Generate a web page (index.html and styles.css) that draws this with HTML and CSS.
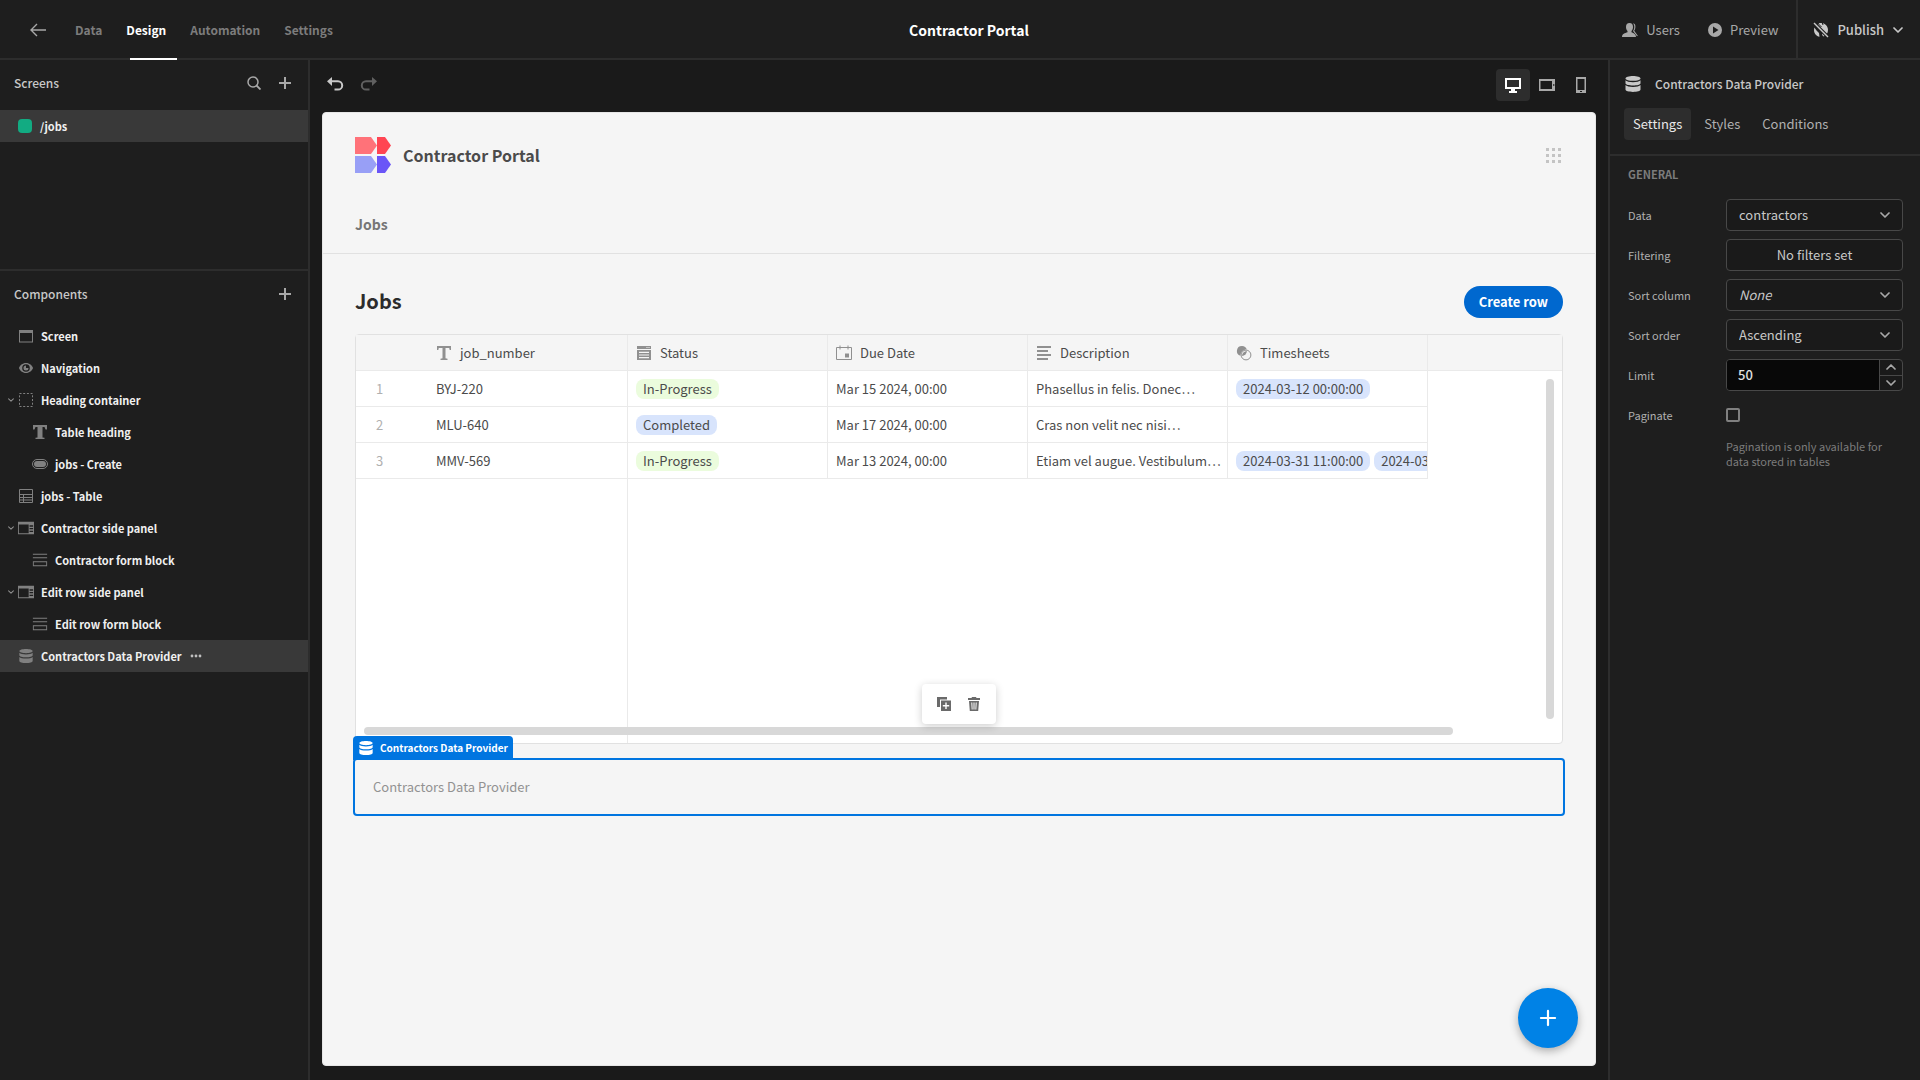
FILE: index.html
```html
<!DOCTYPE html>
<html lang="en">
<head>
<meta charset="utf-8">
<meta name="viewport" content="width=device-width, initial-scale=1">
<title>Contractor Portal</title>
<link rel="stylesheet" href="styles.css">
</head>
<body>
<svg class="sprite" aria-hidden="true">
  <symbol id="i-data" viewBox="0 0 18 18"><path d="M9 1C4.900 1 1.500 2 1.500 3.400S4.900 5.800 9 5.800s7.500-1 7.500-2.400S13.100 1 9 1z"/><path d="M1.500 5.300v2.900C1.500 9.500 4.900 10.500 9 10.500s7.500-1 7.500-2.300V5.300C15.500 6.500 12.500 7.200 9 7.200s-6.500-.7-7.500-1.900z"/><path d="M1.500 10v4.600C1.500 16 4.900 17 9 17s7.500-1 7.500-2.400V10c-1 1.200-4 1.900-7.500 1.900S2.500 11.200 1.500 10z"/></symbol>
  <symbol id="i-plus" viewBox="0 0 14 14"><path d="M6 1h2v5h5v2H8v5H6V8H1V6h5z"/></symbol>
  <symbol id="i-chev" viewBox="0 0 10 6"><path d="M1 1l4 4 4-4" fill="none" stroke="currentColor" stroke-width="1.700" stroke-linecap="round" stroke-linejoin="round"/></symbol>
  <symbol id="i-undo" viewBox="0 0 18 18"><path d="M6 .9v9L1 5.200z"/><path d="M5 5.200h7a4 4 0 0 1 0 8.400H8.500" fill="none" stroke="currentColor" stroke-width="2"/></symbol>
  <symbol id="i-panel" viewBox="0 0 18 14"><path d="M0 0h18v14H0zM1 3v10h11V3zM13 4v1.500h4V4zm0 3v1.500h4V7zm0 3v1.500h4V10z" fill-rule="evenodd"/></symbol>
  <symbol id="i-form" viewBox="0 0 18 14"><path d="M1 0h16v1H1zM1 4h16v1H1zM1 8.500h16V14H1zm1 1V13h14V9.500z" fill-rule="evenodd"/></symbol>
  <symbol id="i-text" viewBox="0 0 16 16"><path d="M1 1h14v4h-1.300l-.5-2H9.500v10.300l2 .4V15h-7v-1.300l2-.4V3H2.800l-.5 2H1z"/></symbol>
</svg>

<div class="app">
  <header class="topbar">
    <nav class="main-nav">
      <a class="back" href="#" aria-label="Back"><svg width="16" height="14" viewBox="0 0 16 14"><path d="M7 1L1 7l6 6M1 7h15" fill="none" stroke="currentColor" stroke-width="1.400"/></svg></a>
      <a href="#">Data</a>
      <a class="active" href="#">Design</a>
      <a href="#">Automation</a>
      <a href="#">Settings</a>
    </nav>
    <h1 class="app-title">Contractor Portal</h1>
    <div class="actions">
      <button class="action" type="button"><svg width="16" height="15" viewBox="0 0 16 15"><path d="M7.500 0C5.200 0 4 1.600 4 4c0 1.800.6 3 1.500 3.900v1.300C3 10 0 10.800 0 14h14c0-2.800-2-3.900-4.500-4.800V7.900C10.400 7 11 5.800 11 4c0-2.400-1.200-4-3.500-4z"/><path d="M11 .3c2 .3 2.600 2 2.400 4-.1 1.500-.5 2.600-1.200 3.400l3.600 5.100-.8.500-4-5.300c1-1.200 1.300-2.500 1.300-4S11.900 1.200 11 .3z"/></svg>Users</button>
      <button class="action" type="button"><svg width="14" height="14" viewBox="0 0 14 14"><path d="M7 0a7 7 0 1 0 0 14A7 7 0 0 0 7 0zM5 3.500L10.500 7 5 10.500z" fill-rule="evenodd"/></svg>Preview</button>
      <button class="action publish" type="button"><svg width="16" height="16" viewBox="0 0 16 16"><path d="M8 1c3.900 0 7 3.100 7 7 0 3-1.800 5.500-4.300 6.500L9 13l1-3-3-2-3-4 2-2.700C6.600 1.100 7.300 1 8 1zM1.300 5.500L3.500 8.500 6 11l.5 3.800C3.400 14.200 1 11.400 1 8z"/><path d="M1 1l14 14" stroke="#1e1e1e" stroke-width="3.500"/><path d="M1 1l14 14" stroke="currentColor" stroke-width="1.400"/><path d="M4.500 1l4 4M9 0l1 3" stroke="#1e1e1e" stroke-width="1"/></svg>Publish<svg class="caret" width="10" height="6"><use href="#i-chev"/></svg></button>
    </div>
  </header>

  <aside class="sidebar">
    <section class="screens">
      <header class="side-head"><h2>Screens</h2>
        <button type="button" aria-label="Search screens"><svg width="14" height="14" viewBox="0 0 14 14"><path d="M9.500 9.500L13.500 13.500" stroke="currentColor" stroke-width="1.800"/><circle cx="6" cy="6" r="5" fill="none" stroke="currentColor" stroke-width="1.500"/></svg></button>
        <button type="button" aria-label="Add screen"><svg width="14" height="14"><use href="#i-plus"/></svg></button>
      </header>
      <a class="row selected screen-row" href="#"><span class="swatch"></span>/jobs</a>
    </section>
    <section>
      <header class="side-head comp-head"><h2>Components</h2>
        <button type="button" aria-label="Add component"><svg width="14" height="14"><use href="#i-plus"/></svg></button>
      </header>
      <ul class="tree">
        <li><a class="row" href="#"><span class="twist"></span><svg class="ico" viewBox="0 0 16 16"><path d="M1 2h14v12.500H1zM2 5v8.500h12V5z" fill-rule="evenodd"/></svg>Screen</a></li>
        <li><a class="row" href="#"><span class="twist"></span><svg class="ico" viewBox="0 0 16 16"><path d="M8 3C4.500 3 1.800 5.500 1 8c.8 2.500 3.500 5 7 5s6.200-2.500 7-5c-.8-2.500-3.500-5-7-5zm0 1.200a3.800 3.800 0 1 1 0 7.600 3.800 3.800 0 0 1 0-7.600z" fill-rule="evenodd"/><path d="M8 5.500a2.500 2.500 0 1 0 2.500 2.500H8z"/></svg>Navigation</a></li>
        <li><a class="row" href="#"><span class="twist"><svg width="6" height="4"><use href="#i-chev"/></svg></span><svg class="ico" viewBox="0 0 16 16"><rect x="1.500" y="1.500" width="13" height="13" fill="none" stroke="currentColor" stroke-dasharray="2 1.700"/></svg>Heading container</a></li>
        <li><a class="row nested" href="#"><svg class="ico" viewBox="0 0 16 16"><path d="M1 1h14v4.500h-1.500L12.500 3h-2v10.500l2 .3V15h-9v-1.200l2-.3V3h-2l-1 2.500H1z"/></svg>Table heading</a></li>
        <li><a class="row nested" href="#"><svg class="ico" viewBox="0 0 16 16"><rect x=".5" y="3.500" width="15" height="9" rx="4.500" fill="none" stroke="currentColor"/><rect x="2" y="5" width="12" height="6" rx="3"/></svg>jobs - Create</a></li>
        <li><a class="row" href="#"><span class="twist"></span><svg class="ico" viewBox="0 0 16 16"><path d="M1.500 1.500h13v13h-13zM1.500 6.500h13M1.500 9.500h13M1.500 12h13M5.500 6.500v8" fill="none" stroke="currentColor"/></svg>jobs - Table</a></li>
        <li><a class="row" href="#"><span class="twist"><svg width="6" height="4"><use href="#i-chev"/></svg></span><svg class="ico"><use href="#i-panel"/></svg>Contractor side panel</a></li>
        <li><a class="row nested" href="#"><svg class="ico"><use href="#i-form"/></svg>Contractor form block</a></li>
        <li><a class="row" href="#"><span class="twist"><svg width="6" height="4"><use href="#i-chev"/></svg></span><svg class="ico"><use href="#i-panel"/></svg>Edit row side panel</a></li>
        <li><a class="row nested" href="#"><svg class="ico"><use href="#i-form"/></svg>Edit row form block</a></li>
        <li><a class="row selected" href="#"><span class="twist"></span><svg class="ico"><use href="#i-data"/></svg>Contractors Data Provider<svg class="more" width="12" height="4" viewBox="0 0 12 4"><circle cx="2" cy="2" r="1.400"/><circle cx="6" cy="2" r="1.400"/><circle cx="10" cy="2" r="1.400"/></svg></a></li>
      </ul>
    </section>
  </aside>

  <main class="stage">
    <div class="toolbar">
      <button type="button" aria-label="Undo"><svg width="18" height="18"><use href="#i-undo"/></svg></button>
      <button class="off redo" type="button" aria-label="Redo"><svg width="18" height="18"><use href="#i-undo"/></svg></button>
      <div class="devices">
        <button class="on" type="button" aria-label="Desktop"><svg width="16" height="16" viewBox="0 0 16 16"><path d="M0 1h16v11h-6v2h2v2H4v-2h2v-2H0zm2 2v7h12V3z" fill-rule="evenodd"/></svg></button>
        <button type="button" aria-label="Tablet"><svg width="16" height="16" viewBox="0 0 16 16"><path d="M0 2h16v12H0zM1.500 4v8H13V4zm12.800 3v2h1V7z" fill-rule="evenodd"/></svg></button>
        <button type="button" aria-label="Mobile"><svg width="16" height="16" viewBox="0 0 16 16"><path d="M3 0h10v16H3zM4.500 2v11h7V2zM7 14v1h2v-1z" fill-rule="evenodd"/></svg></button>
      </div>
    </div>

    <div class="preview">
      <header class="site-head">
        <div class="brand">
          <svg width="36" height="36" viewBox="0 0 36 36"><path fill="#ff7279" d="M0 0h16l6 8.500-6 8.500H0z"/><path fill="#ff4553" d="M22 0h8l6 8.500-6 8.500h-8z"/><path fill="#989ff6" d="M0 19h16l6 8.500-6 8.500H0z"/><path fill="#6a55f7" d="M22 19h8l6 8.500-6 8.500h-8z"/></svg>
          <span class="brand-name">Contractor Portal</span>
          <button class="apps" type="button" aria-label="App menu"><svg width="15" height="15" viewBox="0 0 15 15"><path d="M0 0h3v3H0zm6 0h3v3H6zm6 0h3v3h-3zM0 6h3v3H0zm6 0h3v3H6zm6 0h3v3h-3zM0 12h3v3H0zm6 0h3v3H6zm6 0h3v3h-3z"/></svg></button>
        </div>
        <nav class="site-nav"><a href="#">Jobs</a></nav>
      </header>
      <div class="site-body">
        <div class="heading"><h2>Jobs</h2><button class="create" type="button">Create row</button></div>
        <div class="grid">
          <table>
            <colgroup><col class="c-idx"><col class="c"><col class="c"><col class="c"><col class="c"><col class="c"><col></colgroup>
            <thead><tr>
              <th class="idx"></th>
              <th><div class="th"><svg width="16" height="16"><use href="#i-text"/></svg>job_number</div></th>
              <th><div class="th"><svg width="16" height="16" viewBox="0 0 16 16"><path d="M1 1h14v3H1zm9.500 1v1h1V2zm2 0v1h1V2zM1 5h14v10H1zm2 1.800V8h10V6.800zm0 2.700v1h10v-1zm0 2.500v1.200h10V12z" fill-rule="evenodd"/></svg>Status</div></th>
              <th><div class="th"><svg width="16" height="16" viewBox="0 0 16 16"><path d="M.5 2.500h15v12H.5zM4 .5v4M12 .5v4" fill="none" stroke="currentColor"/><path d="M9 8.500h4v4H9z"/></svg>Due Date</div></th>
              <th><div class="th"><svg width="16" height="16" viewBox="0 0 16 16"><path d="M1 1h14v2H1zm0 4h11v2H1zm0 4h14v2H1zm0 4h11v2H1z"/></svg>Description</div></th>
              <th><div class="th"><svg width="16" height="16" viewBox="0 0 16 16"><path d="M6 1a5 5 0 0 0-1.500 9.800C4.500 7 7 4.500 10.800 4.500A5 5 0 0 0 6 1z"/><circle cx="10" cy="10" r="4.900" fill="none" stroke="currentColor"/><path d="M10.900 6a5 5 0 0 1-4.900 4.900A5 5 0 0 1 10.900 6z"/></svg>Timesheets</div></th>
              <th class="rest"></th>
            </tr></thead>
            <tbody>
              <tr><td class="idx">1</td><td>BYJ-220</td><td><span class="tag green">In-Progress</span></td><td>Mar 15 2024, 00:00</td><td>Phasellus in felis. Donec…</td><td><div class="tags"><span class="tag">2024-03-12 00:00:00</span></div></td><td class="rest"></td></tr>
              <tr><td class="idx">2</td><td>MLU-640</td><td><span class="tag">Completed</span></td><td>Mar 17 2024, 00:00</td><td>Cras non velit nec nisi…</td><td></td><td class="rest"></td></tr>
              <tr><td class="idx">3</td><td>MMV-569</td><td><span class="tag green">In-Progress</span></td><td>Mar 13 2024, 00:00</td><td>Etiam vel augue. Vestibulum…</td><td><div class="tags"><span class="tag">2024-03-31 11:00:00</span><span class="tag">2024-03-31 11:00:00</span></div></td><td class="rest"></td></tr>
            </tbody>
          </table>
          <div class="below"></div>
          <div class="vbar"></div>
          <div class="hbar"></div>
          <div class="float-menu">
            <button type="button" aria-label="Duplicate"><svg width="16" height="16" viewBox="0 0 16 16"><path d="M1 1h10v2.500H4V11H1z"/><path d="M5 4.500h10V15H5zM9.300 6.500v2.600H6.800v1.400h2.500v2.600h1.400v-2.600h2.500V9.100h-2.500V6.500z" fill-rule="evenodd"/></svg></button>
            <button type="button" aria-label="Delete"><svg width="16" height="16" viewBox="0 0 16 16"><path d="M6 1h4l.5 1H14v2H2V2h3.500zM3 5h10l-.8 10H3.800zM5.300 6.500l.4 7h.9l-.3-7zm2.200 0v7h1v-7zm2.200 0l-.3 7h.9l.4-7z" fill-rule="evenodd"/></svg></button>
          </div>
        </div>
        <div class="provider">
          <div class="provider-tag"><svg width="16" height="16"><use href="#i-data"/></svg>Contractors Data Provider</div>
          Contractors Data Provider
        </div>
      </div>
      <button class="fab" type="button" aria-label="Add component"><svg width="18" height="18" viewBox="0 0 14 14"><path d="M7 1.500v11M1.500 7h11" stroke="currentColor" stroke-width="1.700" stroke-linecap="round"/></svg></button>
    </div>
  </main>

  <aside class="inspector">
    <header class="insp-head">
      <div class="insp-title"><svg width="18" height="18"><use href="#i-data"/></svg><h2>Contractors Data Provider</h2></div>
      <div class="tabs"><button class="on" type="button">Settings</button><button type="button">Styles</button><button type="button">Conditions</button></div>
    </header>
    <form class="fields">
      <h3>GENERAL</h3>
      <div class="field"><label for="f-data">Data</label><div class="pick"><select id="f-data"><option>contractors</option></select><svg width="10" height="6"><use href="#i-chev"/></svg></div></div>
      <div class="field"><label for="f-filter">Filtering</label><button class="box" id="f-filter" type="button">No filters set</button></div>
      <div class="field"><label for="f-col">Sort column</label><div class="pick"><select class="placeholder" id="f-col"><option>None</option></select><svg width="10" height="6"><use href="#i-chev"/></svg></div></div>
      <div class="field"><label for="f-order">Sort order</label><div class="pick"><select id="f-order"><option>Ascending</option></select><svg width="10" height="6"><use href="#i-chev"/></svg></div></div>
      <div class="field"><label for="f-limit">Limit</label><div class="stepper"><input id="f-limit" type="number" value="50"><div class="steps"><button type="button" aria-label="Increase"><svg class="up" width="10" height="6"><use href="#i-chev"/></svg></button><button type="button" aria-label="Decrease"><svg width="10" height="6"><use href="#i-chev"/></svg></button></div></div></div>
      <div class="field"><label for="f-page">Paginate</label><input id="f-page" class="check" type="checkbox"></div>
      <p class="help">Pagination is only available for data stored in tables</p>
    </form>
  </aside>
</div>
</body>
</html>
```
FILE: styles.css
```css
:root {
  --line: #2d2d2d;
  --panel: #1e1e1e;
  --well: #1a1a1a;
  --hover: #393939;
  --text: #c8c8c8;
  --muted: #7c7c7c;
  --blue: #0075e0;
  --fs-s: 11px;
  --fs: 13px;
}

* { box-sizing: border-box; }

body {
  margin: 0;
  background: var(--panel);
  color: var(--text);
  font: 400 var(--fs)/20px "Noto Sans CJK SC", "Noto Sans", sans-serif;
}

h1, h2, h3, p, ul { margin: 0; padding: 0; font-weight: 400; }
ul { list-style: none; }
a { color: inherit; text-decoration: none; }
svg { display: block; flex: none; fill: currentColor; }
button, input, select { font: inherit; color: inherit; margin: 0; }
button { padding: 0; border: 0; background: none; display: flex; align-items: center; justify-content: center; cursor: pointer; }
.sprite { position: absolute; width: 0; height: 0; }

.app {
  display: grid;
  grid-template: 60px 1fr / 310px minmax(0, 1fr) 312px;
  min-height: 100vh;
}

/* Top bar */
.topbar {
  grid-column: 1 / -1;
  display: grid;
  grid-template-columns: 1fr auto 1fr;
  border-bottom: 2px solid var(--line);
  padding-left: 18px;
}
.main-nav { display: flex; gap: 24px; height: 60px; padding-left: 12px; color: var(--muted); font-size: 12px; font-weight: 700; }
.main-nav a { position: relative; display: flex; align-items: center; }
.main-nav .back { color: #a8a8a8; margin-right: 5px; }
.main-nav .active { color: #fff; }
.main-nav .active::after { content: ""; position: absolute; left: 4px; bottom: 0; width: 47px; height: 2px; background: #fff; }
.app-title { font-size: 14px; font-weight: 700; color: #fff; align-self: center; }
.actions { display: flex; justify-content: flex-end; gap: 28px; }
.action { gap: 8px; color: #a8a8a8; }
.publish { margin-left: -10px; padding: 0 17px 0 15px; border-left: 2px solid var(--line); color: var(--text); font-weight: 500; }
.caret { margin-left: 1px; }

/* Left panel */
.sidebar { border-right: 2px solid var(--line); }
.screens { height: 211px; border-bottom: 2px solid var(--line); }
.side-head { display: flex; align-items: center; gap: 17px; height: 50px; padding: 0 16px 4px 14px; color: #a8a8a8; }
.side-head h2 { flex: 1; font-size: 12px; font-weight: 500; color: var(--text); }
.comp-head { height: 49px; }
.row { display: flex; align-items: center; height: 32px; padding: 0 8px; color: #f0f0f0; font-size: var(--fs-s); font-weight: 700; }
.row.selected { background: var(--hover); }
.screen-row { gap: 8px; padding-left: 18px; }
.swatch { width: 14px; height: 14px; border-radius: 4px; background: #12ab82; }
.twist { width: 10px; color: #909090; }
.ico { width: 16px; height: 16px; margin-right: 7px; color: #808080; }
.row.nested { padding-left: 32px; }
.more { margin-left: 8px; color: #c0c0c0; }

/* Canvas */
.stage { display: flex; flex-direction: column; background: var(--well); padding: 0 12px 14px; }
.toolbar { display: flex; align-items: center; gap: 16px; height: 52px; padding: 0 0 2px 4px; }
.toolbar .off { color: #606060; }
.redo svg { transform: scaleX(-1); }
.devices { display: flex; margin: 0 -2px 0 auto; color: #a8a8a8; }
.devices button { width: 34px; height: 32px; border-radius: 4px; }
.devices .on { background: #2d2d2d; color: #fff; }

.preview {
  position: relative;
  flex: 1;
  border: 1px solid #e6e6e6;
  border-radius: 4px;
  background: #f5f5f5;
  color: #4b4b4b;
}
.site-head { border-bottom: 1px solid #e1e1e1; padding: 24px 32px 17px; }
.brand { display: flex; align-items: center; gap: 12px; }
.brand-name { font-size: 16px; line-height: 24px; font-weight: 700; flex: 1; }
.apps { color: #c4c4c4; margin-right: 2px; }
.site-nav { margin-top: 39px; font-size: 14px; line-height: 24px; font-weight: 700; color: #767676; }
.site-body { padding: 32px; }
.heading { display: flex; align-items: center; justify-content: space-between; margin-bottom: 16px; }
.heading h2 { font-size: 20px; line-height: 28px; padding-bottom: 2px; font-weight: 700; color: #2c2c2c; }
.create { height: 32px; padding: 0 15px; border-radius: 16px; background: #0068cf; color: #fff; font-weight: 700; }

.grid { position: relative; display: flex; flex-direction: column; height: 410px; border: 1px solid #e1e1e1; border-radius: 4px; background: #fff; }
table { width: 100%; border-collapse: separate; border-spacing: 0; table-layout: fixed; }
.c-idx { width: 72px; }
.c { width: 200px; }
th, td { height: 36px; padding: 0 8px; border: 0 solid #eaeaea; border-width: 0 1px 1px 0; text-align: left; font-weight: 400; white-space: nowrap; overflow: hidden; }
thead th { background: #f5f5f5; }
.idx { border-right: 0; padding: 0 0 0 20px; color: #b0b0b0; }
th.rest { border-right: 0; }
td.rest { border: 0; }
.th { display: flex; align-items: center; gap: 8px; }
.th svg { color: #909090; }
.below { flex: 1; width: 272px; border-right: 1px solid #eaeaea; }
.tags { display: flex; gap: 4px; margin-right: -8px; overflow: hidden; }
.tag { display: inline-block; padding: 0 7px; border-radius: 8px; background: #d8e4fc; line-height: 20px; }
.tag.green { background: #ebfcdd; }
.vbar { position: absolute; top: 44px; right: 8px; bottom: 24px; width: 8px; border-radius: 4px; background: #d8d8d8; }
.hbar { position: absolute; left: 8px; right: 109px; bottom: 8px; height: 8px; border-radius: 4px; background: #d8d8d8; }
.float-menu { position: absolute; left: 50%; bottom: 19px; transform: translateX(-50%); display: flex; gap: 14px; padding: 12px 14px; border-radius: 4px; background: #fff; color: #6a6a6a; box-shadow: 0 2px 8px rgba(0, 0, 0, .2); }

.provider { position: relative; margin: 14px -2px 0; padding: 17px 18px; border: 2px solid var(--blue); border-radius: 4px; color: #929292; }
.provider-tag { position: absolute; left: -2px; bottom: 100%; display: flex; align-items: center; gap: 6px; height: 24px; padding: 0 5px; border-radius: 4px 4px 0 0; background: var(--blue); color: #fff; font-size: 10px; font-weight: 700; }
.fab { position: absolute; right: 17px; bottom: 17px; width: 60px; height: 60px; border-radius: 50%; background: #0082e6; color: #fff; box-shadow: 0 3px 8px rgba(0, 0, 0, .3); }

/* Right panel */
.inspector { border-left: 2px solid var(--line); }
.insp-head { padding: 12px 14px 14px; border-bottom: 2px solid var(--line); }
.insp-title { display: flex; align-items: center; gap: 13px; height: 24px; }
.insp-title h2 { font-size: 12px; font-weight: 500; }
.tabs { display: flex; gap: 4px; margin-top: 12px; }
.tabs button { height: 32px; padding: 0 9px; border-radius: 4px; color: #b0b0b0; }
.tabs .on { background: #2d2d2d; color: #e8e8e8; }
.fields { padding: 9px 17px 0 18px; }
.fields h3 { height: 34px; line-height: 18px; font-size: var(--fs-s); font-weight: 700; color: var(--muted); }
.field { display: grid; grid-template-columns: 98px minmax(0, 1fr); align-items: center; height: 32px; margin-bottom: 8px; }
.field label { font-size: var(--fs-s); color: #b0b0b0; }
.box, .pick select, .stepper { width: 100%; height: 32px; border: 1px solid #484848; border-radius: 4px; background: var(--well); }
.pick { display: grid; align-items: center; }
.pick > * { grid-area: 1 / 1; }
.pick select { appearance: none; padding: 0 32px 0 12px; line-height: 20px; }
.pick svg { justify-self: end; margin-right: 13px; color: #a8a8a8; pointer-events: none; }
.placeholder { font-style: italic; }
.stepper { display: flex; overflow: hidden; }
.stepper input { flex: 1; min-width: 0; border: 0; padding: 0 11px; background: #080808; color: #e0e0e0; font-weight: 500; appearance: textfield; }
.stepper input::-webkit-inner-spin-button { appearance: none; }
.steps { display: flex; flex-direction: column; width: 23px; border-left: 1px solid #484848; color: #a8a8a8; }
.steps button { flex: 1; }
.steps button + button { border-top: 1px solid #484848; }
.up { transform: rotate(180deg); }
.check { appearance: none; width: 14px; height: 14px; border: 2px solid #808080; border-radius: 2px; }
.help { margin: 0 0 0 98px; font-size: var(--fs-s); line-height: 15px; color: var(--muted); }
```
